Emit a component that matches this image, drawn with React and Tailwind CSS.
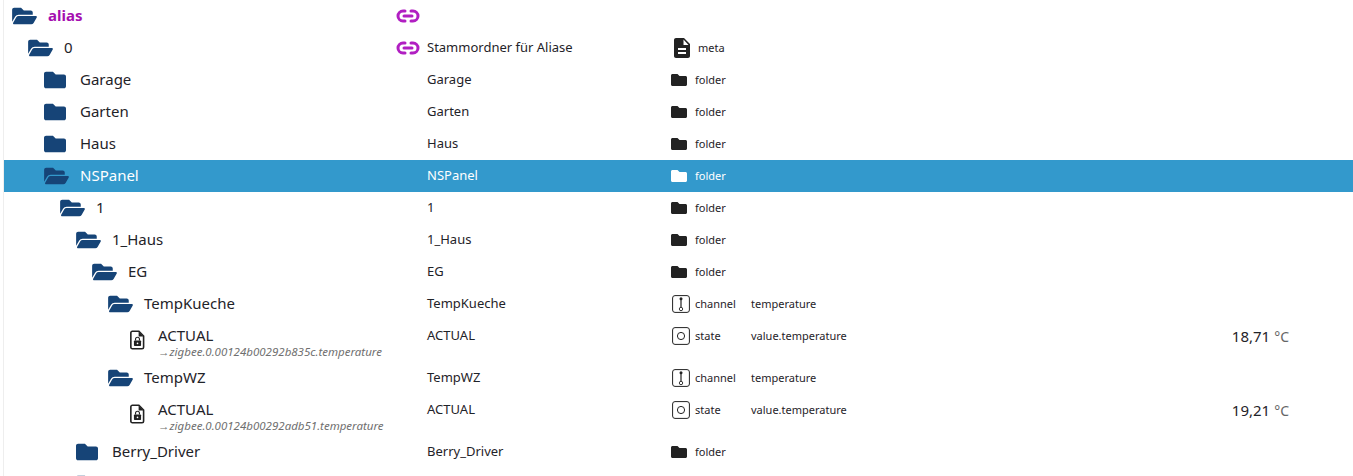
import React from 'react';
import { Link2 } from 'lucide-react';
import { FaFolder, FaFolderOpen } from 'react-icons/fa';

const rows = [
  { depth: 0, name: 'alias', kind: 'open', root: true, link: true },
  { depth: 1, name: '0', kind: 'open', link: true, title: 'Stammordner für Aliase', role: 'meta' },
  { depth: 2, name: 'Garage', kind: 'closed', title: 'Garage', role: 'folder' },
  { depth: 2, name: 'Garten', kind: 'closed', title: 'Garten', role: 'folder' },
  { depth: 2, name: 'Haus', kind: 'closed', title: 'Haus', role: 'folder' },
  { depth: 2, name: 'NSPanel', kind: 'open', title: 'NSPanel', role: 'folder', selected: true },
  { depth: 3, name: '1', kind: 'open', title: '1', role: 'folder' },
  { depth: 4, name: '1_Haus', kind: 'open', title: '1_Haus', role: 'folder' },
  { depth: 5, name: 'EG', kind: 'open', title: 'EG', role: 'folder' },
  { depth: 6, name: 'TempKueche', kind: 'open', title: 'TempKueche', role: 'channel', type: 'temperature' },
  { depth: 7, name: 'ACTUAL', kind: 'file', alias: '→zigbee.0.00124b00292b835c.temperature', title: 'ACTUAL', role: 'state', type: 'value.temperature', value: '18,71' },
  { depth: 6, name: 'TempWZ', kind: 'open', title: 'TempWZ', role: 'channel', type: 'temperature' },
  { depth: 7, name: 'ACTUAL', kind: 'file', alias: '→zigbee.0.00124b00292adb51.temperature', title: 'ACTUAL', role: 'state', type: 'value.temperature', value: '19,21' },
  { depth: 4, name: 'Berry_Driver', kind: 'closed', title: 'Berry_Driver', role: 'folder' },
  { depth: 4, name: '', kind: 'closed' },
];

function LockedFile() {
  return (
    <svg viewBox="0 0 16 21" className="w-[15px] h-5 text-[#222]">
      <path d="M2.5 1.2h7l5 5v12a1.6 1.6 0 0 1-1.6 1.6H2.5A1.6 1.6 0 0 1 .9 18.2V2.8a1.6 1.6 0 0 1 1.6-1.6z" fill="none" stroke="currentColor" strokeWidth="1.7" />
      <path d="M9.2 1.5v5.2h5.2z" fill="currentColor" />
      <rect x="4.2" y="11" width="7.6" height="6" rx="0.8" fill="currentColor" />
      <path d="M5.9 11V9.6a2.1 2.1 0 0 1 4.2 0V11" fill="none" stroke="currentColor" strokeWidth="1.2" />
      <circle cx="8" cy="14" r="0.9" fill="#fff" />
    </svg>
  );
}

function ChannelIcon() {
  return (
    <svg viewBox="0 0 18 18" className="w-[18px] h-[18px] ml-[1px] text-[#222]">
      <rect x="0.6" y="0.6" width="16.8" height="16.8" rx="2.4" fill="none" stroke="currentColor" strokeWidth="1" />
      <circle cx="9" cy="3.8" r="1.5" fill="currentColor" />
      <path d="M9 4v8.4" stroke="currentColor" strokeWidth="1.2" />
      <circle cx="9" cy="14" r="1.7" fill="#fff" stroke="currentColor" strokeWidth="0.9" />
    </svg>
  );
}

function StateIcon() {
  return (
    <svg viewBox="0 0 18 18" className="w-[18px] h-[18px] ml-[1px] text-[#222]">
      <rect x="0.6" y="0.6" width="16.8" height="16.8" rx="2.4" fill="none" stroke="currentColor" strokeWidth="1" />
      <circle cx="9" cy="9" r="3.6" fill="none" stroke="currentColor" strokeWidth="1" />
    </svg>
  );
}

function RoleIcon({ role, selected }) {
  if (role === 'meta') {
    return (
      <svg viewBox="0 0 24 24" className="w-6 h-6 -ml-[1px] text-[#222]" fill="currentColor">
        <path d="M14 2H6c-1.1 0-2 .9-2 2v16c0 1.1.89 2 2 2h12c1.1 0 2-.9 2-2V8l-6-6zm2 16H8v-2h8v2zm0-4H8v-2h8v2zm-2.5-5V3.5L18.5 9h-5z" />
      </svg>
    );
  }
  if (role === 'channel') return <ChannelIcon />;
  if (role === 'state') return <StateIcon />;
  return <FaFolder className={selected ? 'w-4 h-4 text-white' : 'w-4 h-4 text-[#222]'} />;
}

function TreeIcon({ kind }) {
  if (kind === 'file') return <div className="w-[34px] shrink-0 pl-[6px] mt-[5px]"><LockedFile /></div>;
  return (
    <div className="w-9 shrink-0">
      {kind === 'open'
        ? <FaFolderOpen className="w-[25px] h-[22px] text-[#164477]" />
        : <FaFolder className="w-[22px] h-[22px] text-[#164477]" />}
    </div>
  );
}

function Row({ row }) {
  const { selected, alias } = row;
  return (
    <div className={`flex ${alias ? 'h-[42px]' : 'h-8'} ${selected ? 'bg-[#3399cc] text-white' : 'text-[#1f2329]'}`}>
      <div
        className={`w-[392px] shrink-0 flex ${alias ? 'items-start pt-[5px]' : 'h-8 items-center'}`}
        style={{ paddingLeft: 8 + row.depth * 16 }}
      >
        <TreeIcon kind={row.kind} />
        <div className={alias ? 'min-w-0' : 'min-w-0 pb-[2px]'}>
          <div className={row.root ? 'text-[15px] font-bold text-[#a50eb0] leading-5' : 'text-[15px] leading-5'}>{row.name}</div>
          {alias && <div className="mt-[2px] text-[11.5px] italic text-[#6f6f6f] leading-[10px] whitespace-nowrap">{alias}</div>}
        </div>
      </div>
      <div className="w-[31px] shrink-0 h-8 flex items-center">
        {row.link && <Link2 size={24} strokeWidth={3} className="text-[#b11fc2]" />}
      </div>
      <div className="w-[244px] shrink-0 h-8 flex items-center text-[13px]">{row.title}</div>
      <div className="w-20 shrink-0 h-8 flex items-center text-[11px]">
        {row.role && (
          <div className={row.role === 'meta' ? 'w-[27px] shrink-0' : 'w-6 shrink-0'}>
            <RoleIcon role={row.role} selected={selected} />
          </div>
        )}
        <span>{row.role}</span>
      </div>
      <div className="flex-1 h-8 flex items-center text-[11px]">{row.type}</div>
      <div className="w-[64px] mr-[64px] shrink-0 h-8 flex items-center justify-end text-[15px] whitespace-nowrap">
        {row.value && <>{row.value}<span className="text-[#666] text-[14px] ml-1">°C</span></>}
      </div>
    </div>
  );
}

export default function App() {
  return (
    <div className="h-[476px] w-[1353px] overflow-hidden bg-white font-['Noto_Sans','Open_Sans',sans-serif]">
      <div className="ml-[3px] border-l border-[#eeeeee]">
        {rows.map((row, i) => <Row key={i} row={row} />)}
      </div>
    </div>
  );
}
